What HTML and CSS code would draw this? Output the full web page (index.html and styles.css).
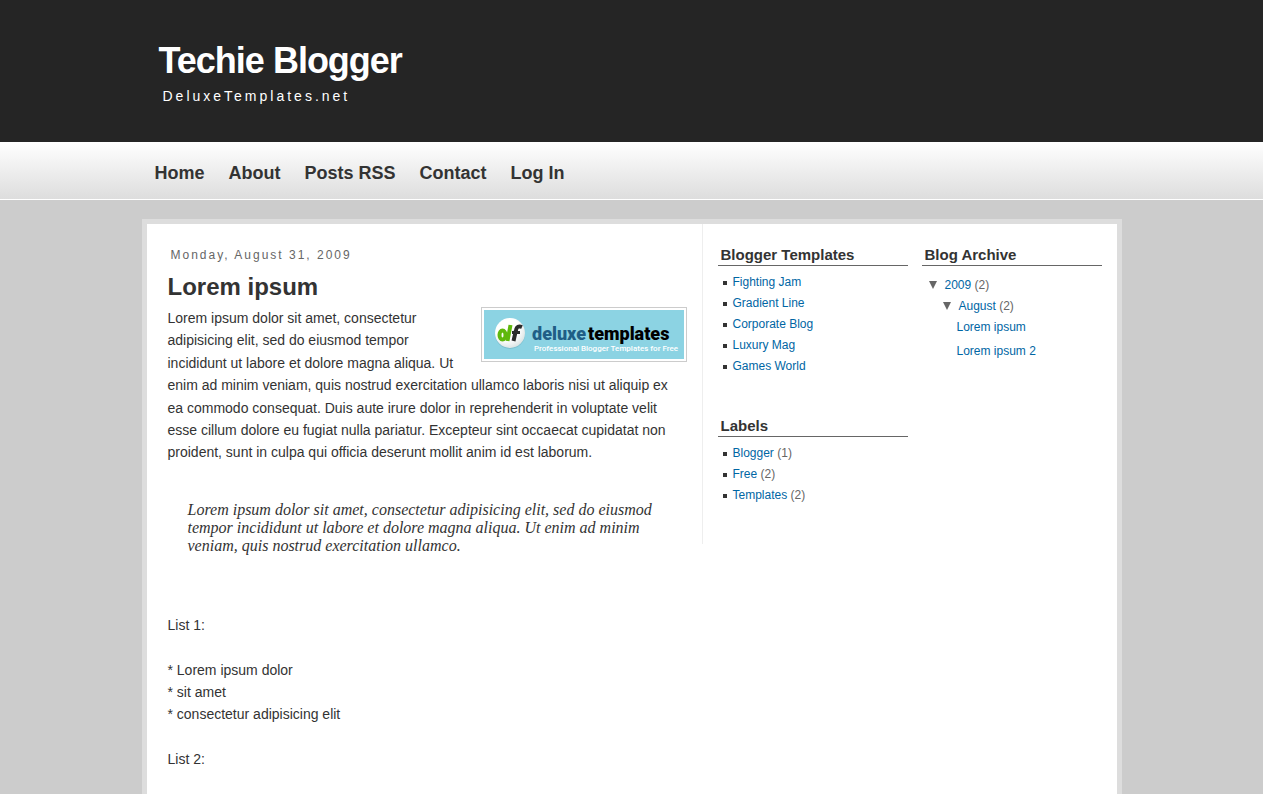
FILE: index.html
```html
<!DOCTYPE html>
<html lang="en">
<head>
<meta charset="utf-8">
<meta name="viewport" content="width=device-width, initial-scale=1">
<title>Techie Blogger</title>
<link rel="stylesheet" href="styles.css">
</head>
<body class="page">
<header class="masthead">
  <div class="masthead-inner">
    <h1 class="site-title">Techie Blogger</h1>
    <p class="site-description">DeluxeTemplates.net</p>
  </div>
</header>
<nav class="menu" aria-label="Main">
  <ul class="menu-list">
    <li><a class="menu-link" href="#home">Home</a></li>
    <li><a class="menu-link" href="#about">About</a></li>
    <li><a class="menu-link" href="#rss">Posts RSS</a></li>
    <li><a class="menu-link" href="#contact">Contact</a></li>
    <li><a class="menu-link" href="#login">Log In</a></li>
  </ul>
</nav>
<div class="content">
  <main class="posts">
    <p class="post-date">Monday, August 31, 2009</p>
    <article>
      <h2 class="post-title">Lorem ipsum</h2>
      <div class="post-body">
        <svg class="banner" width="206" height="55" viewBox="0 0 206 55" role="img" aria-label="Deluxe Templates: Professional Blogger Templates for Free">
          <defs>
            <radialGradient id="disc" cx="40%" cy="35%" r="65%">
              <stop offset="0.6" stop-color="#fff"/>
              <stop offset="1" stop-color="#dfe6e6"/>
            </radialGradient>
          </defs>
          <rect x="0.5" y="0.5" width="205" height="54" fill="#fff" stroke="#ccc"/>
          <rect x="3" y="3" width="200" height="49" fill="#8cd3e3"/>
          <circle cx="29" cy="27" r="15" fill="#6fb2c2" opacity="0.6"/>
          <circle cx="29" cy="26" r="15" fill="url(#disc)"/>
          <g fill="none" stroke-width="4">
            <ellipse cx="21.500" cy="28" rx="3" ry="4.500" stroke="#5fb80c"/>
            <path d="M29.500 18 L26.500 34" stroke="#5fb80c"/>
            <path d="M41 20 Q36 18 35 23 L32.500 34" stroke="#2b2b2b"/>
            <path d="M31 25.500 H39" stroke="#2b2b2b" stroke-width="3"/>
          </g>
          <text class="banner-name" x="51" y="33"><tspan class="banner-deluxe">deluxe</tspan><tspan x="107">templates</tspan></text>
          <text class="banner-tagline" x="53" y="44">Professional Blogger Templates for Free</text>
        </svg>
        <p class="text">Lorem ipsum dolor sit amet, consectetur adipisicing elit, sed do eiusmod tempor incididunt ut labore et dolore magna aliqua. Ut enim ad minim veniam, quis nostrud exercitation ullamco laboris nisi ut aliquip ex ea commodo consequat. Duis aute irure dolor in reprehenderit in voluptate velit esse cillum dolore eu fugiat nulla pariatur. Excepteur sint occaecat cupidatat non proident, sunt in culpa qui officia deserunt mollit anim id est laborum.</p>
        <blockquote class="quote">Lorem ipsum dolor sit amet, consectetur adipisicing elit, sed do eiusmod tempor incididunt ut labore et dolore magna aliqua. Ut enim ad minim veniam, quis nostrud exercitation ullamco.</blockquote>
        <p class="text">List 1:<br><br>* Lorem ipsum dolor<br>* sit amet<br>* consectetur adipisicing elit<br><br>List 2:</p>
      </div>
    </article>
  </main>
  <aside class="sidebar">
    <div class="column">
      <section class="widget">
        <h2 class="widget-title">Blogger Templates</h2>
        <ul class="links">
          <li><a href="#fighting-jam">Fighting Jam</a></li>
          <li><a href="#gradient-line">Gradient Line</a></li>
          <li><a href="#corporate-blog">Corporate Blog</a></li>
          <li><a href="#luxury-mag">Luxury Mag</a></li>
          <li><a href="#games-world">Games World</a></li>
        </ul>
      </section>
      <section class="widget">
        <h2 class="widget-title">Labels</h2>
        <ul class="links">
          <li><a href="#blogger">Blogger</a> (1)</li>
          <li><a href="#free">Free</a> (2)</li>
          <li><a href="#templates">Templates</a> (2)</li>
        </ul>
      </section>
    </div>
    <div class="column">
      <section class="widget">
        <h2 class="widget-title">Blog Archive</h2>
        <ul class="archive">
          <li><span class="toggle"></span><a href="#2009">2009</a> (2)
            <ul class="archive-months">
              <li><span class="toggle"></span><a href="#august">August</a> (2)
                <ul class="archive-posts">
                  <li><a href="#lorem-ipsum">Lorem ipsum</a></li>
                  <li><a href="#lorem-ipsum-2">Lorem ipsum 2</a></li>
                </ul>
              </li>
            </ul>
          </li>
        </ul>
      </section>
    </div>
  </aside>
</div>
</body>
</html>
```
FILE: styles.css
```css
* { box-sizing: border-box; }

h1, h2, p, ul, blockquote { margin: 0; padding: 0; }

ul { list-style: none; }

a { color: #0066a4; text-decoration: none; }
a:hover { text-decoration: underline; }

.page {
  margin: 0;
  min-height: 100vh;
  display: flex;
  flex-direction: column;
  background: #ccc;
  color: #333;
  font: 14px/1.6 "Liberation Sans", Arial, sans-serif;
}

.masthead { background: #252525; color: #fff; }

.masthead-inner {
  max-width: 980px;
  margin: 0 auto;
  padding: 40px 17px 35px;
}

.site-title {
  font-size: 36px;
  line-height: 42px;
  letter-spacing: -1px;
}

.site-description {
  padding: 3px 4px 0;
  line-height: 22px;
  letter-spacing: 3px;
}

.menu {
  background: linear-gradient(#fff, #ddd);
  border-bottom: 1px solid #fff;
}

.menu-list {
  max-width: 980px;
  margin: 0 auto;
  padding: 19px 13px 13px;
  display: flex;
  flex-wrap: wrap;
  gap: 0 24px;
}

.menu-link {
  display: block;
  color: #333;
  font-size: 18px;
  font-weight: bold;
  line-height: 25px;
}

.content {
  flex: 1;
  width: 100%;
  max-width: 980px;
  margin: 19px auto 0;
  display: flex;
  align-items: flex-start;
  background: #fff;
  border: 5px solid #ddd;
  border-bottom: 0;
}

.posts {
  flex: 1;
  padding: 20px 15px 20px 21px;
}

.post-date {
  padding-left: 3px;
  color: #666;
  font-size: 12px;
  line-height: 22px;
  letter-spacing: 2px;
}

.post-title {
  margin-top: 5px;
  font-size: 24px;
  line-height: 32px;
}

.post-body { padding-top: 4px; }

.text { padding-right: 10px; }

.banner { float: right; margin-left: 20px; }

.banner-name { font: 900 18px Roboto, sans-serif; }

.banner-deluxe { fill: #1f5e86; }

.banner-tagline {
  fill: #fff;
  font: 500 8px Roboto, sans-serif;
}

.quote {
  margin: 37px 20px 59px;
  font: italic 16px/18px Georgia, "Liberation Serif", serif;
}

.sidebar {
  flex: 0 0 415px;
  display: flex;
  gap: 14px;
  padding: 20px 15px 0;
  border-left: 1px solid #eee;
}

.column { flex: 0 0 190px; }
.column + .column { flex: 1; }

.widget { margin-bottom: 34px; color: #666; font-size: 12px; line-height: 21px; }

.widget-title {
  padding: 1px 3px 0;
  border-bottom: 1px solid #666;
  color: #333;
  font-size: 15px;
  line-height: 20px;
}

.links { padding: 6px 0 4px 15px; }

.links li { position: relative; }

.links li::before {
  content: "";
  position: absolute;
  left: -10px;
  top: 9px;
  width: 4px;
  height: 4px;
  background: #333;
}

.archive { padding: 9px 7px; }
.archive-months { padding-left: 14px; }
.archive-posts { padding-left: 14px; }
.archive-posts li + li { margin-top: 3px; }

.toggle {
  display: inline-block;
  margin-right: 8px;
  border: solid transparent;
  border-width: 8px 4px 0;
  border-top-color: #666;
}

@media (max-width: 900px) {
  .content { flex-wrap: wrap; }
  .posts { flex-basis: 100%; }
}
```
